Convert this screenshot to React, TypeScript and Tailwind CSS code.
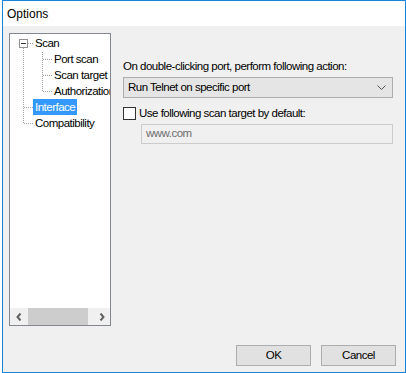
import { useState } from "react";

const font = { fontFamily: '"Liberation Sans", Arial, sans-serif' };

const TreeLines = () => (
  <svg
    className="absolute left-0 top-0 pointer-events-none"
    width="100"
    height="120"
    viewBox="0 0 100 120"
  >
    <g stroke="#a0a0a0" strokeWidth="1" strokeDasharray="1 1" fill="none">
      {/* main trunk */}
      <line x1="13.5" y1="14" x2="13.5" y2="90" />
      <line x1="18" y1="9.5" x2="24" y2="9.5" />
      <line x1="14" y1="73.5" x2="23" y2="73.5" />
      <line x1="14" y1="89.5" x2="24" y2="89.5" />
      {/* scan children */}
      <line x1="32.5" y1="18" x2="32.5" y2="58" />
      <line x1="33" y1="25.5" x2="43" y2="25.5" />
      <line x1="33" y1="41.5" x2="43" y2="41.5" />
      <line x1="33" y1="57.5" x2="43" y2="57.5" />
    </g>
    {/* expander */}
    <rect x="9.5" y="5.5" width="8" height="8" fill="#fff" stroke="#919191" />
    <line x1="11" y1="9.5" x2="16" y2="9.5" stroke="#333" />
  </svg>
);

const rows = [
  { label: "Scan", indent: 25 },
  { label: "Port scan", indent: 44 },
  { label: "Scan target", indent: 44 },
  { label: "Authorization", indent: 44 },
  { label: "Interface", indent: 23, selected: true },
  { label: "Compatibility", indent: 25 },
];

const Chevron = ({ dir }: { dir: "left" | "right" }) => (
  <svg width="6" height="8" viewBox="0 0 6 8">
    <path
      d={dir === "left" ? "M4.5 0.5 L1.5 4 L4.5 7.5" : "M1.5 0.5 L4.5 4 L1.5 7.5"}
      stroke="#606060"
      strokeWidth="2"
      fill="none"
    />
  </svg>
);

export default function App() {
  const [useTarget, setUseTarget] = useState(false);

  return (
    <div
      className="w-[406px] h-[373px] bg-white pl-[2px] text-[11.5px] tracking-[-0.5px] text-black"
      style={font}
    >
      <div className="w-[404px] h-[373px] border border-[#1883d7] flex flex-col">
        {/* Title */}
        <div className="h-[25px] bg-white flex items-center pl-[4px] text-[12px] tracking-normal">Options</div>

        {/* Body */}
        <div className="flex-1 bg-[#f0f0f0] flex flex-col">
          <div className="flex">
            {/* Tree */}
            <div className="ml-[6px] mt-[7px] w-[102px] h-[293px] border border-[#828790] bg-white flex flex-col">
              <div className="relative flex-1 overflow-hidden pt-[1px]">
                <TreeLines />
                {rows.map((r) => (
                  <div key={r.label} className="h-[16px] flex items-center" style={{ paddingLeft: r.indent }}>
                    <span
                      className={
                        r.selected
                          ? "bg-[#3399ff] text-white px-[2px] leading-[16px] whitespace-nowrap"
                          : "leading-[16px] whitespace-nowrap"
                      }
                    >
                      {r.label}
                    </span>
                  </div>
                ))}
              </div>
              <div className="h-[17px] flex bg-[#f0f0f0]">
                <div className="w-[17px] flex items-center justify-center">
                  <Chevron dir="left" />
                </div>
                <div className="flex-1 flex items-stretch">
                  <div className="ml-[1px] w-[60px] bg-[#cdcdcd]" />
                </div>
                <div className="w-[17px] flex items-center justify-center">
                  <Chevron dir="right" />
                </div>
              </div>
            </div>

            {/* Right panel */}
            <div className="ml-[12px] flex flex-col">
              <div className="mt-[32px] h-[16px] leading-[16px]">
                On double-clicking port, perform following action:
              </div>
              <div className="mt-[3px] w-[270px] h-[21px] border border-[#adadad] bg-[#e5e5e5] flex items-center justify-between pl-[4px] pr-[6px]">
                <span>Run Telnet on specific port</span>
                <svg width="9" height="5" viewBox="0 0 9 5">
                  <path d="M0.5 0.5 L4.5 4.5 L8.5 0.5" stroke="#505050" fill="none" />
                </svg>
              </div>
              <label className="mt-[8px] flex items-center h-[15px] cursor-default">
                <span
                  onClick={() => setUseTarget(!useTarget)}
                  className="w-[13px] h-[13px] border border-[#333] bg-white"
                />
                <span className="ml-[3px]">Use following scan target by default:</span>
              </label>
              <div className="mt-[3px] ml-[18px] w-[252px] h-[20px] border border-[#cccccc] bg-[#f0f0f0] flex items-center pl-[4px] text-[#6d6d6d]">
                www.com
              </div>
            </div>
          </div>

          {/* Buttons */}
          <div className="flex justify-end gap-[10px] mt-[19px] pr-[9px]">
            <button className="w-[75px] h-[21px] border border-[#adadad] bg-[#e1e1e1]">OK</button>
            <button className="w-[75px] h-[21px] border border-[#adadad] bg-[#e1e1e1]">Cancel</button>
          </div>
        </div>
      </div>
    </div>
  );
}
